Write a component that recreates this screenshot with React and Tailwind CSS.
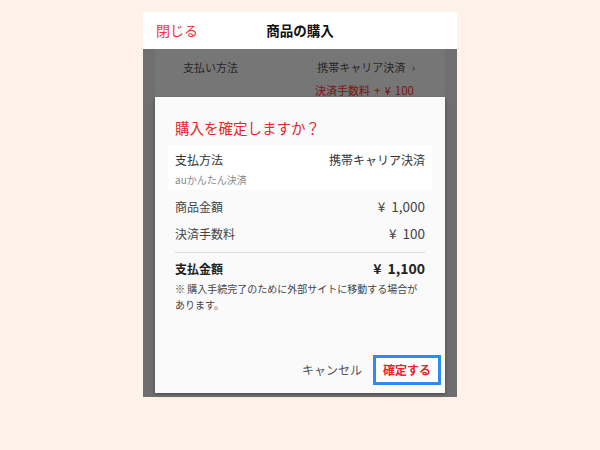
import React from 'react';

function Row({ label, value, bold }) {
    return (
        <div className={`flex justify-between items-center h-[27px] ${bold ? 'font-bold text-[#222]' : 'text-[#444]'}`}>
            <span className="text-[12px]">{label}</span>
            <span className={bold ? 'text-[14px]' : 'text-[13.5px]'}>¥<span className="ml-[6px]">{value}</span></span>
        </div>
    );
}

export default function App() {
    return (
        <div className="w-[600px] h-[450px] bg-[#fef2ea] pt-[12px]" style={{ fontFamily: '"Noto Sans CJK JP", "Noto Sans", sans-serif' }}>
            <div className="w-[314px] ml-[143px] h-[385px] flex flex-col">
                <div className="h-[37px] bg-white flex items-center relative">
                    <span className="ml-[13px] text-[14px] text-[#f0333a]">閉じる</span>
                    <span className="absolute left-0 right-0 text-center text-[13.5px] font-bold text-[#111] pointer-events-none">商品の購入</span>
                </div>
                <div className="flex-1 bg-[#6f6f6f] relative">
                    <div className="mx-[12px] h-full bg-[#767676] pt-[10px] pl-[28px] pr-[30px] text-[11px]">
                        <div className="flex justify-between text-[#262626]">
                            <span>支払い方法</span>
                            <span>携帯キャリア決済 <span className="ml-[4px]">›</span></span>
                        </div>
                        <div className="text-right text-[#7a1414] mt-[6px] pr-[1px]">決済手数料<span className="text-[11.5px] ml-[4px]">+<span className="ml-[4px]">¥</span><span className="ml-[4px]">100</span></span></div>
                    </div>

                    <div className="absolute left-[12px] top-[48px] w-[290px] h-[296px] bg-[#fafafa] shadow-[0_2px_4px_rgba(0,0,0,0.35)] flex flex-col">
                        <div className="px-[20px] pt-[20px] h-[48px] text-[14.5px] text-[#e8252b]">購入を確定しますか？</div>
                        <div className="mx-[13px] bg-white h-[45px] px-[7px] pt-[5px]">
                            <div className="flex justify-between text-[12px] text-[#333] leading-[20px]">
                                <span>支払方法</span>
                                <span>携帯キャリア決済</span>
                            </div>
                            <div className="text-[10px] text-[#888] leading-[16px] mt-[2px]">auかんたん決済</div>
                        </div>
                        <div className="px-[20px] pt-[3px]">
                            <Row label="商品金額" value="1,000" />
                            <Row label="決済手数料" value="100" />
                            <div className="border-t border-[#dedede] mt-[5px] mb-[2px]" />
                            <Row label="支払金額" value="1,100" bold />
                            <p className="text-[10px] text-[#444] leading-[16px] -mt-[1px]">※ 購入手続完了のために外部サイトに移動する場合があります。</p>
                        </div>
                        <div className="flex-1" />
                        <div className="flex justify-end items-center pr-[4px] pb-[8px] gap-[11px]">
                            <span className="text-[12px] text-[#555]">キャンセル</span>
                            <button className="h-[30px] w-[68px] border-[3px] border-[#2a8cf4] bg-white text-[12px] font-bold text-[#e8252b]">確定する</button>
                        </div>
                    </div>
                </div>
            </div>
        </div>
    );
}
